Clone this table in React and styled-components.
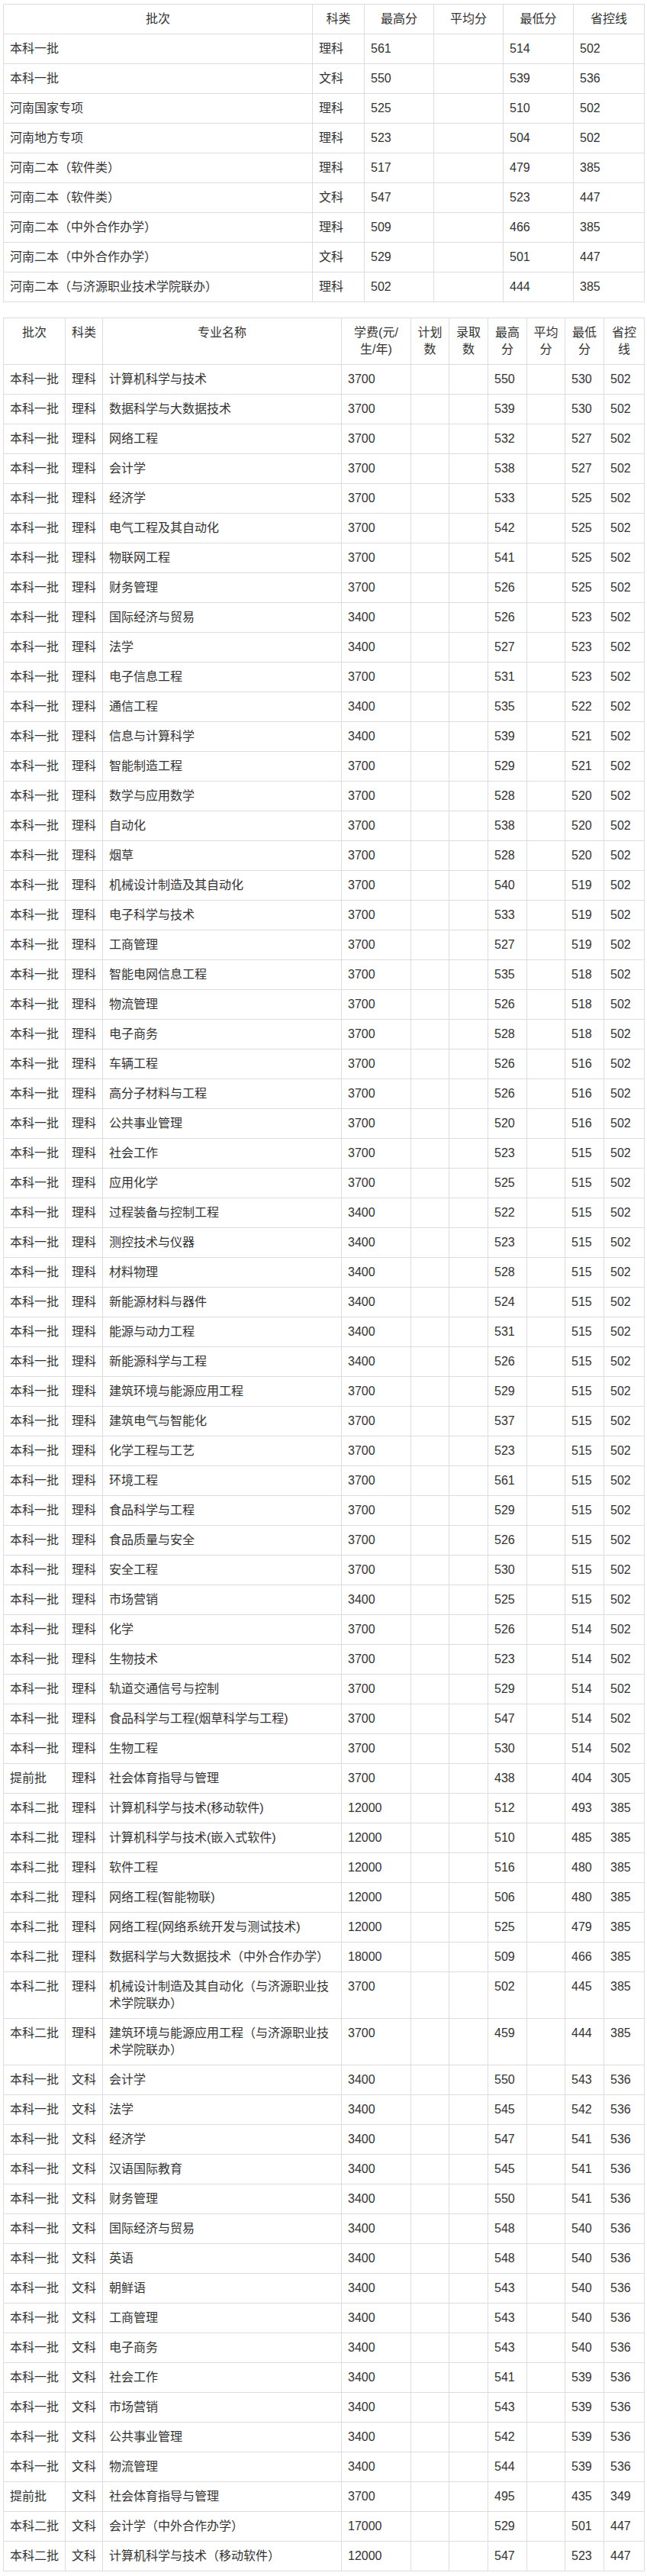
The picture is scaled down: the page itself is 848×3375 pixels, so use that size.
import React from "react";
import styled, { createGlobalStyle } from "styled-components";

const GlobalStyle = createGlobalStyle`
  html, body {
    margin: 0;
    padding: 0;
    background: #fff;
  }
  body {
    font-family: "Liberation Sans", Arial, "Noto Sans CJK SC", sans-serif;
    color: #333;
  }
`;

const Page = styled.div`
  width: 840px;
  padding: 5px 4px 7px;
  display: flex;
  flex-direction: column;
  gap: 20px;
`;

const ScoreTable = styled.table`
  width: 840px;
  table-layout: fixed;
  border-collapse: collapse;
  border-spacing: 0;
  font-size: 16px;
  line-height: 22px;
`;

const HeadCell = styled.th`
  border: 1px solid #ddd;
  padding: 8px;
  font-weight: normal;
  text-align: center;
  vertical-align: top;
  color: #333;
`;

const Cell = styled.td`
  border: 1px solid #ddd;
  padding: 8px;
  text-align: left;
  vertical-align: top;
  color: #333;
`;

const batchCols = [405, 68, 91, 91, 92, 93];
const batchHead = ["批次", "科类", "最高分", "平均分", "最低分", "省控线"];
const batchRows = [
  ["本科一批", "理科", "561", "", "514", "502"],
  ["本科一批", "文科", "550", "", "539", "536"],
  ["河南国家专项", "理科", "525", "", "510", "502"],
  ["河南地方专项", "理科", "523", "", "504", "502"],
  ["河南二本（软件类）", "理科", "517", "", "479", "385"],
  ["河南二本（软件类）", "文科", "547", "", "523", "447"],
  ["河南二本（中外合作办学）", "理科", "509", "", "466", "385"],
  ["河南二本（中外合作办学）", "文科", "529", "", "501", "447"],
  ["河南二本（与济源职业技术学院联办）", "理科", "502", "", "444", "385"],
];

const majorCols = [81, 49, 313, 91, 50, 51, 51, 50, 51, 53];
const majorHead = ["批次", "科类", "专业名称", "学费(元/生/年)", "计划数", "录取数", "最高分", "平均分", "最低分", "省控线"];

// 批次, 科类, 专业, 学费, 最高, 最低, 省控
const majors = [
  ["本科一批", "理科", "计算机科学与技术", "3700", "550", "530", "502"],
  ["本科一批", "理科", "数据科学与大数据技术", "3700", "539", "530", "502"],
  ["本科一批", "理科", "网络工程", "3700", "532", "527", "502"],
  ["本科一批", "理科", "会计学", "3700", "538", "527", "502"],
  ["本科一批", "理科", "经济学", "3700", "533", "525", "502"],
  ["本科一批", "理科", "电气工程及其自动化", "3700", "542", "525", "502"],
  ["本科一批", "理科", "物联网工程", "3700", "541", "525", "502"],
  ["本科一批", "理科", "财务管理", "3700", "526", "525", "502"],
  ["本科一批", "理科", "国际经济与贸易", "3400", "526", "523", "502"],
  ["本科一批", "理科", "法学", "3400", "527", "523", "502"],
  ["本科一批", "理科", "电子信息工程", "3700", "531", "523", "502"],
  ["本科一批", "理科", "通信工程", "3400", "535", "522", "502"],
  ["本科一批", "理科", "信息与计算科学", "3400", "539", "521", "502"],
  ["本科一批", "理科", "智能制造工程", "3700", "529", "521", "502"],
  ["本科一批", "理科", "数学与应用数学", "3700", "528", "520", "502"],
  ["本科一批", "理科", "自动化", "3700", "538", "520", "502"],
  ["本科一批", "理科", "烟草", "3700", "528", "520", "502"],
  ["本科一批", "理科", "机械设计制造及其自动化", "3700", "540", "519", "502"],
  ["本科一批", "理科", "电子科学与技术", "3700", "533", "519", "502"],
  ["本科一批", "理科", "工商管理", "3700", "527", "519", "502"],
  ["本科一批", "理科", "智能电网信息工程", "3700", "535", "518", "502"],
  ["本科一批", "理科", "物流管理", "3700", "526", "518", "502"],
  ["本科一批", "理科", "电子商务", "3700", "528", "518", "502"],
  ["本科一批", "理科", "车辆工程", "3700", "526", "516", "502"],
  ["本科一批", "理科", "高分子材料与工程", "3700", "526", "516", "502"],
  ["本科一批", "理科", "公共事业管理", "3700", "520", "516", "502"],
  ["本科一批", "理科", "社会工作", "3700", "523", "515", "502"],
  ["本科一批", "理科", "应用化学", "3700", "525", "515", "502"],
  ["本科一批", "理科", "过程装备与控制工程", "3400", "522", "515", "502"],
  ["本科一批", "理科", "测控技术与仪器", "3400", "523", "515", "502"],
  ["本科一批", "理科", "材料物理", "3400", "528", "515", "502"],
  ["本科一批", "理科", "新能源材料与器件", "3400", "524", "515", "502"],
  ["本科一批", "理科", "能源与动力工程", "3400", "531", "515", "502"],
  ["本科一批", "理科", "新能源科学与工程", "3400", "526", "515", "502"],
  ["本科一批", "理科", "建筑环境与能源应用工程", "3700", "529", "515", "502"],
  ["本科一批", "理科", "建筑电气与智能化", "3700", "537", "515", "502"],
  ["本科一批", "理科", "化学工程与工艺", "3700", "523", "515", "502"],
  ["本科一批", "理科", "环境工程", "3700", "561", "515", "502"],
  ["本科一批", "理科", "食品科学与工程", "3700", "529", "515", "502"],
  ["本科一批", "理科", "食品质量与安全", "3700", "526", "515", "502"],
  ["本科一批", "理科", "安全工程", "3700", "530", "515", "502"],
  ["本科一批", "理科", "市场营销", "3400", "525", "515", "502"],
  ["本科一批", "理科", "化学", "3700", "526", "514", "502"],
  ["本科一批", "理科", "生物技术", "3700", "523", "514", "502"],
  ["本科一批", "理科", "轨道交通信号与控制", "3700", "529", "514", "502"],
  ["本科一批", "理科", "食品科学与工程(烟草科学与工程)", "3700", "547", "514", "502"],
  ["本科一批", "理科", "生物工程", "3700", "530", "514", "502"],
  ["提前批", "理科", "社会体育指导与管理", "3700", "438", "404", "305"],
  ["本科二批", "理科", "计算机科学与技术(移动软件)", "12000", "512", "493", "385"],
  ["本科二批", "理科", "计算机科学与技术(嵌入式软件)", "12000", "510", "485", "385"],
  ["本科二批", "理科", "软件工程", "12000", "516", "480", "385"],
  ["本科二批", "理科", "网络工程(智能物联)", "12000", "506", "480", "385"],
  ["本科二批", "理科", "网络工程(网络系统开发与测试技术)", "12000", "525", "479", "385"],
  ["本科二批", "理科", "数据科学与大数据技术（中外合作办学）", "18000", "509", "466", "385"],
  ["本科二批", "理科", "机械设计制造及其自动化（与济源职业技术学院联办）", "3700", "502", "445", "385"],
  ["本科二批", "理科", "建筑环境与能源应用工程（与济源职业技术学院联办）", "3700", "459", "444", "385"],
  ["本科一批", "文科", "会计学", "3400", "550", "543", "536"],
  ["本科一批", "文科", "法学", "3400", "545", "542", "536"],
  ["本科一批", "文科", "经济学", "3400", "547", "541", "536"],
  ["本科一批", "文科", "汉语国际教育", "3400", "545", "541", "536"],
  ["本科一批", "文科", "财务管理", "3400", "550", "541", "536"],
  ["本科一批", "文科", "国际经济与贸易", "3400", "548", "540", "536"],
  ["本科一批", "文科", "英语", "3400", "548", "540", "536"],
  ["本科一批", "文科", "朝鲜语", "3400", "543", "540", "536"],
  ["本科一批", "文科", "工商管理", "3400", "543", "540", "536"],
  ["本科一批", "文科", "电子商务", "3400", "543", "540", "536"],
  ["本科一批", "文科", "社会工作", "3400", "541", "539", "536"],
  ["本科一批", "文科", "市场营销", "3400", "543", "539", "536"],
  ["本科一批", "文科", "公共事业管理", "3400", "542", "539", "536"],
  ["本科一批", "文科", "物流管理", "3400", "544", "539", "536"],
  ["提前批", "文科", "社会体育指导与管理", "3700", "495", "435", "349"],
  ["本科二批", "文科", "会计学（中外合作办学）", "17000", "529", "501", "447"],
  ["本科二批", "文科", "计算机科学与技术（移动软件）", "12000", "547", "523", "447"],
];

const Cols = ({ widths }) => (
  <colgroup>
    {widths.map((w, i) => (
      <col key={i} style={{ width: w }} />
    ))}
  </colgroup>
);

const App = () => {
  return (
    <Page>
      <GlobalStyle />

      <ScoreTable>
        <Cols widths={batchCols} />
        <thead>
          <tr>
            {batchHead.map((h) => (
              <HeadCell key={h}>{h}</HeadCell>
            ))}
          </tr>
        </thead>
        <tbody>
          {batchRows.map((row, i) => (
            <tr key={i}>
              {row.map((v, j) => (
                <Cell key={j}>{v}</Cell>
              ))}
            </tr>
          ))}
        </tbody>
      </ScoreTable>

      <ScoreTable>
        <Cols widths={majorCols} />
        <thead>
          <tr>
            {majorHead.map((h) => (
              <HeadCell key={h}>{h}</HeadCell>
            ))}
          </tr>
        </thead>
        <tbody>
          {majors.map(([batch, kind, name, fee, max, min, line], i) => (
            <tr key={i}>
              <Cell>{batch}</Cell>
              <Cell>{kind}</Cell>
              <Cell>{name}</Cell>
              <Cell>{fee}</Cell>
              <Cell></Cell>
              <Cell></Cell>
              <Cell>{max}</Cell>
              <Cell></Cell>
              <Cell>{min}</Cell>
              <Cell>{line}</Cell>
            </tr>
          ))}
        </tbody>
      </ScoreTable>
    </Page>
  );
};

export default App;
